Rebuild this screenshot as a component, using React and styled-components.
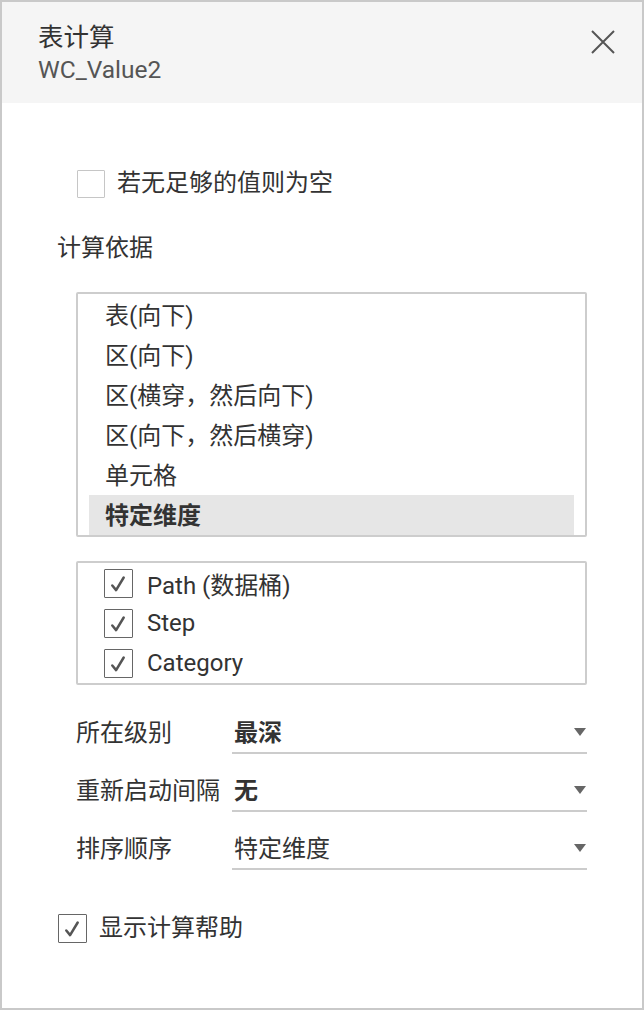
import React from 'react'
import styled, { createGlobalStyle } from 'styled-components'

const GlobalStyle = createGlobalStyle`
  html, body {
    margin: 0;
    padding: 0;
    background: #fff;
  }
  body {
    font-family: Roboto, "Noto Sans CJK SC", sans-serif;
    color: #333;
  }
`

const Panel = styled.div`
  width: 644px;
  height: 1010px;
  box-sizing: border-box;
  border: 2px solid #c9c9c9;
  display: flex;
  flex-direction: column;
  background: #fff;
`

const Header = styled.div`
  height: 101px;
  box-sizing: border-box;
  background: #f5f5f5;
  padding: 19px 26px 0 36px;
  display: flex;
  justify-content: space-between;
  align-items: flex-start;
`

const Title = styled.div`
  font-size: 25.5px;
  line-height: 32px;
  color: #333;
`

const Subtitle = styled.div`
  font-size: 24.5px;
  line-height: 30px;
  margin-top: 2px;
  color: #555;
`

const CloseButton = styled.button`
  border: none;
  background: transparent;
  padding: 0;
  margin-top: 8px;
  width: 26px;
  height: 26px;
  cursor: pointer;
`

const Body = styled.div`
  padding: 66px 55px 0 55px;
  display: flex;
  flex-direction: column;
`

const CheckRow = styled.label`
  display: flex;
  align-items: center;
  gap: ${p => p.$gap || 13}px;
  margin-left: ${p => p.$indent || 0}px;
  margin-top: ${p => p.$top || 0}px;
  font-size: 24px;
  line-height: 29px;
`

const Box = styled.span`
  width: ${p => p.$size || 29}px;
  height: ${p => p.$size || 29}px;
  box-sizing: border-box;
  border: 1.5px solid ${p => (p.$checked ? '#666' : '#c6c6c6')};
  border-radius: 1px;
  display: flex;
  flex-shrink: 0;
  background: #fff;
`

const SectionLabel = styled.div`
  font-size: 24px;
  line-height: 30px;
  margin-top: 35px;
`

const ListBox = styled.div`
  margin-left: 19px;
  margin-top: ${p => p.$top}px;
  border: 2px solid #cdcdcd;
  border-radius: 2px;
  padding: ${p => p.$pad || '1px 11px 0 11px'};
  display: flex;
  flex-direction: column;
`

const ListItem = styled.div`
  height: 40px;
  display: flex;
  align-items: center;
  padding-left: 16px;
  padding-bottom: 3px;
  box-sizing: border-box;
  font-size: 24px;
  font-weight: ${p => (p.$selected ? 700 : 400)};
  background: ${p => (p.$selected ? '#e6e6e6' : 'transparent')};
`

const DimItem = styled.label`
  height: 40px;
  display: flex;
  align-items: center;
  gap: 14px;
  padding-left: 14px;
  font-size: 24px;
`

const Fields = styled.div`
  margin-top: 33px;
  margin-left: 19px;
  display: flex;
  flex-direction: column;
  gap: 22px;
`

const FieldRow = styled.div`
  display: flex;
  align-items: flex-start;
`

const FieldLabel = styled.div`
  width: 156px;
  flex-shrink: 0;
  font-size: 24px;
  line-height: 30px;
`

const Select = styled.div`
  flex: 1;
  display: flex;
  justify-content: space-between;
  align-items: center;
  padding: 0 1px 4px 2px;
  border-bottom: 2px solid #cccccc;
  font-size: 24px;
  line-height: 30px;
  font-weight: ${p => (p.$bold ? 700 : 400)};
`

const Caret = styled.span`
  width: 0;
  height: 0;
  border-left: 6.5px solid transparent;
  border-right: 6.5px solid transparent;
  border-top: 8px solid #666;
  margin-top: -2px;
`

const Check = () => (
  <svg width="26" height="26" viewBox="1.5 1.5 26 26">
    <path d="M8.8 17 L12.6 21.6 L20.2 9" fill="none" stroke="#555" strokeWidth="2.5" strokeLinecap="round" strokeLinejoin="round" />
  </svg>
)

const CheckBox = ({ checked, size }) => (
  <Box $checked={checked} $size={size}>{checked && <Check />}</Box>
)

const partitions = ['表(向下)', '区(向下)', '区(横穿，然后向下)', '区(向下，然后横穿)', '单元格', '特定维度']
const dims = ['Path (数据桶)', 'Step', 'Category']
const fields = [
  { label: '所在级别', value: '最深', bold: true },
  { label: '重新启动间隔', value: '无', bold: true },
  { label: '排序顺序', value: '特定维度', bold: false }
]

export default function App() {
  return (
    <>
      <GlobalStyle />
      <Panel>
        <Header>
          <div>
            <Title>表计算</Title>
            <Subtitle>WC_Value2</Subtitle>
          </div>
          <CloseButton aria-label="close">
            <svg width="26" height="26" viewBox="0 0 26 26">
              <path d="M2 2 L24 24 M24 2 L2 24" stroke="#555" strokeWidth="2" />
            </svg>
          </CloseButton>
        </Header>
        <Body>
          <CheckRow $indent={20} $gap={12}>
            <CheckBox checked={false} size={28} />
            若无足够的值则为空
          </CheckRow>
          <SectionLabel>计算依据</SectionLabel>
          <ListBox $top={29}>
            {partitions.map((p, i) => (
              <ListItem key={p} $selected={i === partitions.length - 1}>{p}</ListItem>
            ))}
          </ListBox>
          <ListBox $top={24} $pad="0 12px">
            {dims.map(d => (
              <DimItem key={d}>
                <CheckBox checked />
                {d}
              </DimItem>
            ))}
          </ListBox>
          <Fields>
            {fields.map(f => (
              <FieldRow key={f.label}>
                <FieldLabel>{f.label}</FieldLabel>
                <Select $bold={f.bold}>
                  {f.value}
                  <Caret />
                </Select>
              </FieldRow>
            ))}
          </Fields>
          <CheckRow $indent={1} $gap={12} $top={44}>
            <CheckBox checked />
            显示计算帮助
          </CheckRow>
        </Body>
      </Panel>
    </>
  )
}
